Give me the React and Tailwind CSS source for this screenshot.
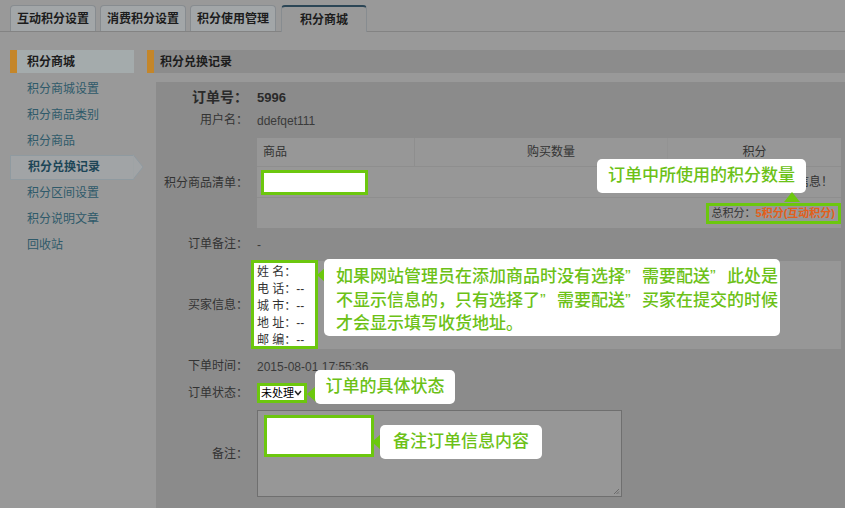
import React from 'react';

const font = { fontFamily: '"Liberation Sans", "Noto Sans CJK SC", sans-serif' };

const tabs = ['互动积分设置', '消费积分设置', '积分使用管理'];
const menu = ['积分商城设置', '积分商品类别', '积分商品', '积分兑换记录', '积分区间设置', '积分说明文章', '回收站'];

const Tip = ({ className, children }) => (
    <div className={`absolute bg-white rounded-[5px] text-[#6cc117] text-[17px] font-medium whitespace-nowrap ${className}`}>
        {children}
    </div>
);

const ArrowLeft = ({ className }) => (
    <div className={`absolute w-0 h-0 border-y-[8px] border-y-transparent border-r-[9px] border-r-[#6cc70e] ${className}`} />
);

// full-width closing quote like the original page
const Q = () => <span className="inline-block w-[17px]">”</span>;

const Row = ({ label, bold, children, className = '' }) => (
    <div className={`flex items-center ${className}`}>
        <div className={`w-[92px] text-right text-[12px] ${bold ? 'font-bold text-[14px] text-[#2a2a2a]' : 'text-[#333]'}`}>
            {label}：
        </div>
        <div className="pl-[9px] flex-1">{children}</div>
    </div>
);

export default function App() {
    return (
        <div className="w-[845px] h-[508px] bg-[#999999] overflow-hidden relative" style={font}>
            {/* tabs */}
            <div className="h-[32px] pl-[10px] flex items-end gap-[4px] border-b border-[#838383]">
                {tabs.map((t) => (
                    <div key={t} className="w-[86px] h-[26px] flex items-center justify-center bg-[#a2a6a8] border border-b-0 border-[#878c90] rounded-t-[4px] text-[12px] font-bold text-[#1c1c1c]">
                        {t}
                    </div>
                ))}
                <div className="ml-[1px] h-[27px] w-[86px] -mb-px flex items-center justify-center bg-[#999999] border border-b-0 border-[#878c90] border-t-2 border-t-[#2c4656] rounded-t-[4px] text-[12px] font-bold text-[#1c1c1c]">
                    积分商城
                </div>
            </div>

            <div className="flex mt-[18px]">
                {/* sidebar */}
                <div className="w-[147px] pl-[10px]">
                    <div className="w-[124px] h-[23px] flex items-center bg-[#a4abac] border-l-[7px] border-[#c4862a] pl-[10px] text-[12px] font-bold text-[#1c1c1c]">
                        积分商城
                    </div>
                    <div className="pt-[3px]">
                        {menu.map((m) =>
                            m === '积分兑换记录' ? (
                                <div key={m} className="relative h-[26px] flex items-center">
                                    <div className="w-[124px] h-[25px] flex items-center pl-[17px] bg-[#a1a4a6] border border-r-0 border-[#8f9aa0] text-[12px] font-bold text-[#1d4657]">
                                        {m}
                                    </div>
                                    <svg className="absolute left-[123px] top-0" width="11" height="26" viewBox="0 0 11 26">
                                        <path d="M0 0.5 L10 13 L0 25.5 Z" fill="#a1a4a6" stroke="#8f9aa0" />
                                        <path d="M0 1.5 L0 24.5" stroke="#a1a4a6" strokeWidth="1.5" />
                                    </svg>
                                </div>
                            ) : (
                                <div key={m} className="h-[26px] flex items-center pl-[17px] text-[12px] text-[#2f5a6a]">
                                    {m}
                                </div>
                            )
                        )}
                    </div>
                </div>

                {/* content */}
                <div className="flex-1">
                    <div className="h-[23px] flex items-center bg-[#8c8c8c] border-l-[7px] border-[#c4862a] pl-[6px] text-[12px] font-bold text-[#1c1c1c]">
                        积分兑换记录
                    </div>
                    <div className="ml-[9px] mt-[9px] h-[430px] bg-[#8b8b8b] pt-[4px] relative">
                        <Row label="订单号" bold className="h-[22px]">
                            <span className="text-[13px] font-bold text-[#2a2a2a]">5996</span>
                        </Row>
                        <Row label="用户名" className="h-[24px]">
                            <span className="text-[12px] text-[#3a3a3a]">ddefqet111</span>
                        </Row>

                        {/* goods list */}
                        <Row label="积分商品清单" className="mt-[6px] h-[90px]">
                            <div className="mr-[4px] h-[90px] bg-[#979797] text-[12px] text-[#333] flex flex-col">
                                <div className="h-[29px] flex border-b border-[#8e8e8e]">
                                    <div className="w-[158px] border-r border-[#8e8e8e] flex items-center pl-[6px]">商品</div>
                                    <div className="flex-1 flex items-center justify-center pl-[20px]">购买数量</div>
                                    <div className="w-[174px] border-l border-[#939393] flex items-center justify-center">积分</div>
                                </div>
                                <div className="h-[31px] flex items-center justify-between border-b border-[#8e8e8e] pl-[4px] pr-[8px]">
                                    <div className="w-[107px] h-[25px] bg-white border-[3px] border-[#6cc70e]" />
                                    <span>暂无商品信息！</span>
                                </div>
                                <div className="flex-1 flex items-center justify-end">
                                    <div className="h-[21px] px-[3px] flex items-center bg-[#979797] border-[3px] border-[#6cc70e] text-[11px] whitespace-nowrap">
                                        <span className="text-[#333]">总积分：</span>
                                        <span className="font-bold text-[#e2601c]">5积分(互动积分)</span>
                                    </div>
                                </div>
                            </div>
                        </Row>

                        <Row label="订单备注" className="h-[32px]">
                            <span className="text-[12px] text-[#3a3a3a]">-</span>
                        </Row>

                        {/* buyer info */}
                        <Row label="买家信息" className="h-[89px]">
                            <div className="mr-[4px] h-[88px] bg-[#979797] relative">
                                <div className="absolute -left-[6px] -top-[1px] w-[67px] h-[89px] bg-white border-[3px] border-[#6cc70e] pl-[3px] pt-[1px] text-[12px] leading-[17px] text-[#333] whitespace-nowrap">
                                    <div>姓 名：</div>
                                    <div>电 话：--</div>
                                    <div>城 市：--</div>
                                    <div>地 址：--</div>
                                    <div>邮 编：--</div>
                                </div>
                            </div>
                        </Row>

                        <Row label="下单时间" className="h-[34px]">
                            <span className="text-[12px] text-[#3a3a3a]">2015-08-01 17:55:36</span>
                        </Row>

                        <Row label="订单状态" className="h-[20px]">
                            <div className="w-[50px] h-[20px] bg-white border-[3px] border-[#6cc70e] flex items-center justify-between pl-[1px] pr-[2px] text-[11px] leading-none text-black whitespace-nowrap">
                                <span>未处理</span>
                                <svg className="shrink-0" width="8" height="6" viewBox="0 0 8 6"><path d="M1 1 L4 4.5 L7 1" fill="none" stroke="#222" strokeWidth="1.5" /></svg>
                            </div>
                        </Row>

                        <Row label="备注" className="mt-[7px] h-[87px]">
                            <div className="w-[365px] h-[87px] bg-[#979797] border border-[#6f6f6f] relative pl-[6px] pt-[4px]">
                                <div className="w-[110px] h-[42px] bg-white border-[3px] border-[#6cc70e]" />
                                <svg className="absolute right-[1px] bottom-[1px]" width="7" height="7" viewBox="0 0 7 7">
                                    <path d="M6 1 L1 6 M6 3.5 L3.5 6 M6 5.5 L5.5 6" stroke="#6b6b6b" strokeWidth="1" />
                                </svg>
                            </div>
                        </Row>
                    </div>
                </div>
            </div>

            {/* callouts */}
            <Tip className="left-[597px] top-[159px] w-[209px] h-[34px] flex items-center justify-center">订单中所使用的积分数量</Tip>
            <div className="absolute left-[784px] top-[192px] w-0 h-0 border-x-[8px] border-x-transparent border-b-[10px] border-b-[#6cc70e]" />

            <ArrowLeft className="left-[317px] top-[267px]" />
            <Tip className="left-[324px] top-[259px] w-[456px] h-[77px] pl-[12px] pt-[6px] leading-[23.5px]">
                <div>如果网站管理员在添加商品时没有选择<Q />需要配送<Q />此处是</div>
                <div>不显示信息的，只有选择了<Q />需要配送<Q />买家在提交的时候</div>
                <div>才会显示填写收货地址。</div>
            </Tip>

            <ArrowLeft className="left-[307px] top-[386px]" />
            <Tip className="left-[315px] top-[370px] w-[140px] h-[34px] flex items-center justify-center">订单的具体状态</Tip>

            <ArrowLeft className="left-[372px] top-[434px]" />
            <Tip className="left-[380px] top-[425px] w-[162px] h-[34px] flex items-center justify-center">备注订单信息内容</Tip>
        </div>
    );
}
